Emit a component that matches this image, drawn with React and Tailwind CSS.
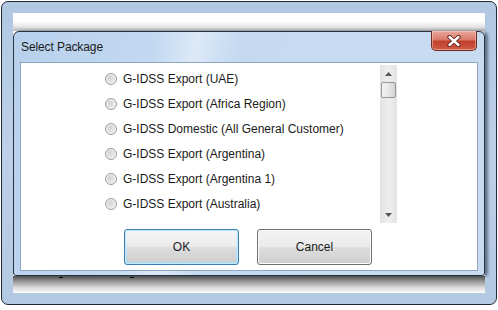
import React from "react";

const items = [
  "G-IDSS Export (UAE)",
  "G-IDSS Export (Africa Region)",
  "G-IDSS Domestic (All General Customer)",
  "G-IDSS Export (Argentina)",
  "G-IDSS Export (Argentina 1)",
  "G-IDSS Export (Australia)",
];

function Radio() {
  return (
    <span className="w-[12px] h-[12px] shrink-0 rounded-full border border-[#9a9a9a] bg-[radial-gradient(circle_at_35%_35%,#d2d2d2_0%,#e2e2e2_45%,#f8f8f8_100%)] shadow-[inset_0_0_0_1px_#f4f4f4]" />
  );
}

export default function App() {
  return (
    <div className="w-[498px] h-[310px] bg-white overflow-hidden" style={{ fontFamily: '"Liberation Sans", Arial, sans-serif' }}>
      <div className="ml-[1px] mt-[1px] w-[496px] h-[304px] rounded-[7px] border border-[#1e2836] bg-[linear-gradient(180deg,#b2c8e2_0%,#bcd0e8_50%,#b3c8e1_100%)] pt-[11px] pl-[11px] pr-[10px] pb-[10px]">
        <div className="w-[472px] h-[280px] bg-white flex flex-col">
          {/* top strip */}
          <div className="h-[18px] shrink-0 bg-[linear-gradient(180deg,#ffffff_0%,#ffffff_45%,#e6e6e6_75%,#b8b8b8_100%)]" />
          {/* dialog */}
          <div className="h-[245px] shrink-0 flex flex-col rounded-t-[6px] rounded-b-[3px] border border-[#27323f] bg-[linear-gradient(100deg,#b7d0ec_0%,#c3d9f1_28%,#dce9f8_36%,#c5daf1_44%,#c8dbf1_100%)] shadow-[3px_0_3px_rgba(30,45,70,0.55)]">
            <div className="h-[30px] shrink-0 flex items-start justify-between pl-[7px] pr-[7px]">
              <span className="mt-[7px] text-[12px] leading-[16px] text-[#1a1a1a] tracking-[-0.1px]">Select Package</span>
              <div className="-mt-[1px] w-[46px] h-[20px] rounded-b-[5px] border border-[#6e2a22] border-t-0 bg-[linear-gradient(180deg,#e9a99c_0%,#d9796a_45%,#c1402e_55%,#cf5a45_100%)] flex items-center justify-center shadow-[inset_0_0_0_1px_rgba(255,210,200,0.5)]">
                <svg width="14" height="12" viewBox="0 0 14 12">
                  <path d="M2.5 2 L11.5 10 M11.5 2 L2.5 10" stroke="#5a1e16" strokeWidth="4.2" strokeLinecap="round" />
                  <path d="M2.5 2 L11.5 10 M11.5 2 L2.5 10" stroke="#ffffff" strokeWidth="2.4" strokeLinecap="round" />
                </svg>
              </div>
            </div>
            <div className="mx-[6px] h-[209px] shrink-0 border border-[#8fa6c2] bg-white flex flex-col">
              {/* list */}
              <div className="mt-[1px] w-[376px] h-[159px] flex overflow-hidden">
                <div className="flex-1 pl-[84px] pt-[2px] flex flex-col">
                  {items.map((t) => (
                    <div key={t} className="h-[25px] shrink-0 flex items-center gap-[6px]">
                      <Radio />
                      <span className="text-[12px] leading-[14px] text-[#1a1a1a] whitespace-nowrap">{t}</span>
                    </div>
                  ))}
                  <div className="h-[25px] shrink-0 flex items-center">
                    <Radio />
                  </div>
                </div>
                <div className="w-[17px] h-[158px] mt-[1px] shrink-0 bg-[linear-gradient(90deg,#e3e3e3_0%,#eeeeee_50%,#e3e3e3_100%)] flex flex-col items-center">
                  <div className="h-[17px] w-full flex items-center justify-center">
                    <svg width="7" height="4" viewBox="0 0 7 4"><path d="M0 4 L3.5 0 L7 4 Z" fill="#555" /></svg>
                  </div>
                  <div className="w-[15px] h-[16px] rounded-[2px] border border-[#979797] bg-[linear-gradient(90deg,#f4f4f4_0%,#e6e6e6_50%,#d4d4d4_100%)]" />
                  <div className="flex-1" />
                  <div className="h-[17px] w-full flex items-center justify-center">
                    <svg width="7" height="4" viewBox="0 0 7 4"><path d="M0 0 L7 0 L3.5 4 Z" fill="#555" /></svg>
                  </div>
                </div>
              </div>
              {/* buttons */}
              <div className="mt-[6px] pl-[103px] flex gap-[18px]">
                <button className="w-[115px] h-[36px] rounded-[3px] border border-[#3c7fb1] bg-[linear-gradient(180deg,#eaf6fd_0%,#d9f0fc_48%,#bee6fd_52%,#a7d9f5_100%)] shadow-[inset_0_0_0_1px_#c5e6f7] text-[12px] text-[#1a1a1a]">
                  <span className="block bg-[linear-gradient(180deg,#f3f3f3_0%,#ebebeb_48%,#dddddd_52%,#cfcfcf_100%)] mx-[2px] h-[30px] leading-[30px] rounded-[2px]">OK</span>
                </button>
                <button className="w-[115px] h-[36px] rounded-[3px] border border-[#707070] bg-[linear-gradient(180deg,#f2f2f2_0%,#ebebeb_48%,#dddddd_52%,#cfcfcf_100%)] shadow-[inset_0_0_0_1px_#fcfcfc] text-[12px] text-[#1a1a1a]">
                  Cancel
                </button>
              </div>
            </div>
          </div>
          {/* bottom strip */}
          <div className="relative h-[16px] shrink-0 bg-[linear-gradient(180deg,#4d4d4d_0%,#9a9a9a_35%,#dedede_75%,#f4f4f4_100%)]">
            <span className="absolute left-[46px] top-[1px] w-[4px] h-[1px] bg-black" />
            <span className="absolute left-[117px] top-[1px] w-[4px] h-[1px] bg-black" />
          </div>
        </div>
      </div>
    </div>
  );
}
